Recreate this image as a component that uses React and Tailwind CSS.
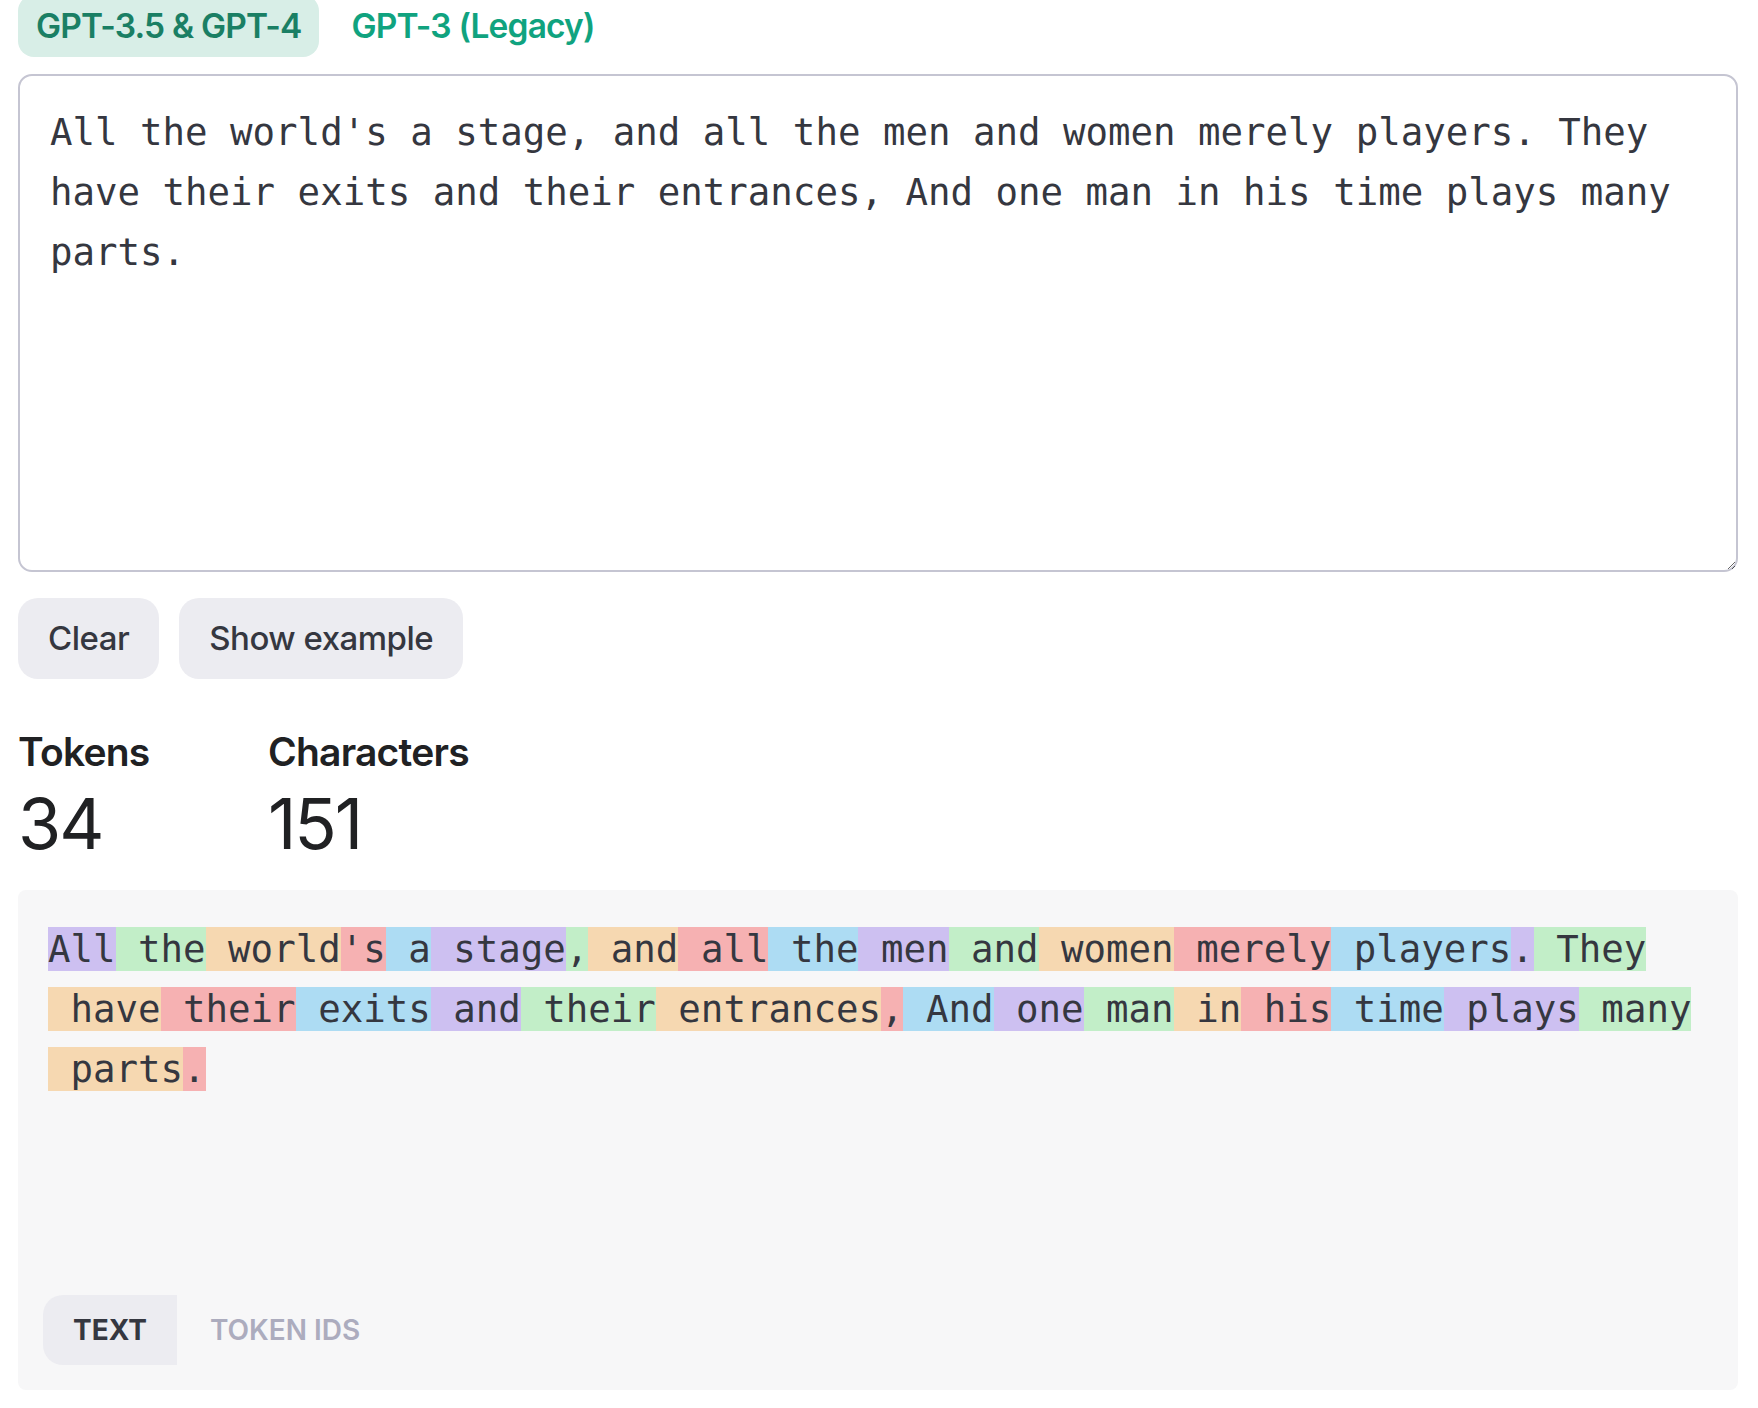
import React, { useState } from 'react';

const SAMPLE =
  "All the world's a stage, and all the men and women merely players. They have their exits and their entrances, And one man in his time plays many parts.";

// token colours cycle in this order
const tokenColors = ['bg-[#cdc0f1]', 'bg-[#c2eec8]', 'bg-[#f6d8b1]', 'bg-[#f6b1b2]', 'bg-[#addcf3]'];

const tokenLines = [
  ['All', ' the', ' world', "'s", ' a', ' stage', ',', ' and', ' all', ' the', ' men', ' and', ' women', ' merely', ' players', '.', ' They'],
  [' have', ' their', ' exits', ' and', ' their', ' entrances', ',', ' And', ' one', ' man', ' in', ' his', ' time', ' plays', ' many'],
  [' parts', '.'],
];

const mono = "font-['DejaVu_Sans_Mono',monospace]";

const App = () => {
  const [model, setModel] = useState('gpt4');
  const [text, setText] = useState(SAMPLE);
  const [view, setView] = useState('text');

  let idx = 0;

  return (
    <div className="min-h-screen bg-white font-['Inter','Liberation_Sans',sans-serif] text-[#353740] overflow-hidden">
      <div className="-mt-[5px] pl-[18px] pr-[20px]">
        {/* Model tabs */}
        <div className="flex gap-[14px]">
          <button
            onClick={() => setModel('gpt4')}
            className={`h-[62px] px-[18px] rounded-[16px] text-[33.5px] font-semibold tracking-[-0.025em] ${
              model === 'gpt4' ? 'bg-[#d8eee7] text-[#1a7f64]' : 'text-[#10a37f]'
            }`}
          >
            GPT-3.5 &amp; GPT-4
          </button>
          <button
            onClick={() => setModel('gpt3')}
            className={`h-[62px] px-[18px] rounded-[16px] text-[33.5px] font-semibold tracking-[-0.025em] ${
              model === 'gpt3' ? 'bg-[#d8eee7] text-[#1a7f64]' : 'text-[#10a37f]'
            }`}
          >
            GPT-3 (Legacy)
          </button>
        </div>

        {/* Input */}
        <textarea
          value={text}
          onChange={(e) => setText(e.target.value)}
          spellCheck={false}
          className={`mt-[17px] block w-full h-[498px] border-2 border-[#c5c5d2] rounded-[14px] pl-[30px] pr-[28px] pt-[26px] text-[37.4px] leading-[60px] text-[#353740] outline-none ${mono}`}
        />

        {/* Actions */}
        <div className="mt-[26px] flex gap-[20px]">
          <button
            onClick={() => setText('')}
            className="h-[81px] px-[30px] rounded-[20px] bg-[#ececf1] text-[33px] font-[550] tracking-[-0.015em]"
          >
            Clear
          </button>
          <button
            onClick={() => setText(SAMPLE)}
            className="h-[81px] px-[30px] rounded-[20px] bg-[#ececf1] text-[33px] font-[550] tracking-[-0.015em]"
          >
            Show example
          </button>
        </div>

        {/* Stats */}
        <div className="mt-[50px] flex text-[#202123]">
          <div className="w-[250px]">
            <div className="text-[39px] leading-[46px] font-semibold tracking-[-0.02em]">Tokens</div>
            <div className="mt-[14px] text-[70px] leading-[70px] tracking-[-0.03em]">34</div>
          </div>
          <div>
            <div className="text-[39px] leading-[46px] font-semibold tracking-[-0.02em]">Characters</div>
            <div className="mt-[14px] text-[70px] leading-[70px] tracking-[-0.03em]">{text.length}</div>
          </div>
        </div>

        {/* Tokenized output */}
        <div className="mt-[31px] h-[500px] rounded-[8px] bg-[#f7f7f8] pt-[29px] px-[25px] pb-[25px] flex flex-col justify-between">
          <div className={`ml-[5px] text-[37.4px] leading-[60px] text-[#353740] ${mono}`}>
            {tokenLines.map((line, li) => (
              <div key={li} className="whitespace-pre">
                {line.map((tok) => {
                  const color = tokenColors[idx % tokenColors.length];
                  idx += 1;
                  return (
                    <span key={idx} className={color}>
                      {tok}
                    </span>
                  );
                })}
              </div>
            ))}
          </div>

          <div className="flex">
            <button
              onClick={() => setView('text')}
              className={`h-[70px] px-[30px] rounded-l-[20px] text-[28px] font-bold uppercase ${
                view === 'text' ? 'bg-[#ececf1] text-[#353740]' : 'text-[#acacbe]'
              }`}
            >
              Text
            </button>
            <button
              onClick={() => setView('ids')}
              className={`h-[70px] px-[33px] text-[28px] font-semibold uppercase ${
                view === 'ids' ? 'bg-[#ececf1] text-[#353740]' : 'text-[#acacbe]'
              }`}
            >
              Token IDs
            </button>
          </div>
        </div>
      </div>
    </div>
  );
};

export default App;
